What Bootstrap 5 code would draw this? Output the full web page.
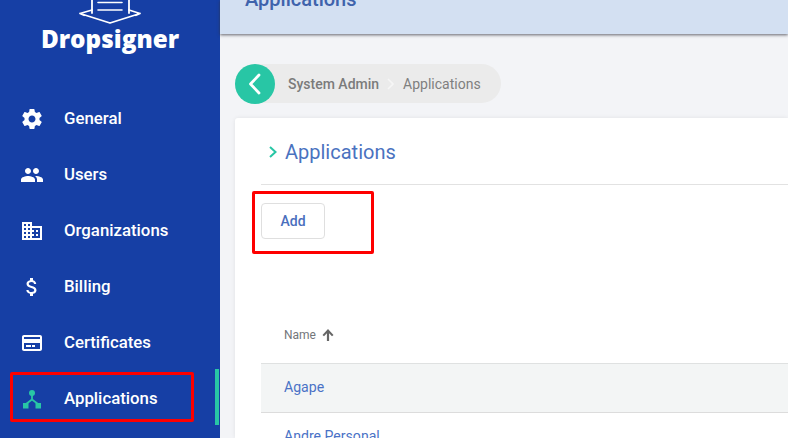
<!DOCTYPE html>
<html lang="en">
<head>
<meta charset="utf-8">
<title>Applications</title>
<link rel="stylesheet" href="https://cdn.jsdelivr.net/npm/bootstrap@5.3.0/dist/css/bootstrap.min.css">
<style>
html,body{height:438px;overflow:hidden}
body{font-family:Roboto,"Liberation Sans",sans-serif;background:#f3f4f7;position:relative}
.side{width:220px;height:438px;background:#163fa5;color:#fff;flex:none}
.logo-wrap{height:92px}
.logo-svg{display:block;margin:-1px auto 0;width:64px;height:26px}
.brand{font-family:"Open Sans",sans-serif;font-weight:800;font-size:24.3px;line-height:30px;color:#fff;text-align:center;margin-top:-1px}
.menu-item{height:56px;padding-left:20px;color:#fff;font-size:16.8px;font-weight:500;text-decoration:none;position:relative}
.menu-item:hover{color:#fff}
.menu-ico{width:24px;height:24px;margin-right:20px;flex:none;fill:#fff}
.ico-teal{fill:#28c6a5;stroke:none}
.ico-teal-line{fill:none;stroke:#28c6a5;stroke-width:1.800}
.active-bar{position:absolute;right:1px;top:-2px;width:4px;height:56px;background:#28c6a5}
.top{height:34px;background:#d3e0f2;box-shadow:0 1px 3px rgba(50,50,60,.75);padding:0 0 23px 25px;position:relative;z-index:1}
.top h1{font-size:20px;font-weight:500;color:#3f63ac;margin:0;line-height:24px;white-space:nowrap}
.main{min-width:0}
.crumbs{margin:30px 0 0 15px;height:39px;width:266px;background:#ebebeb;border-radius:20px}
.crumb-back{width:40px;height:40px;border-radius:50%;background:#28c6a5;flex:none;margin-top:-1px;margin-bottom:-1px}
.crumb-a{font-size:14px;font-weight:500;color:#7b7b7b;margin-left:13px;padding-top:2px}
.crumb-sep{margin:0 9px 0 8px;display:block}
.crumb-b{font-size:14px;color:#7f7f7f;padding-top:2px}
.panel{margin:15px 0 0 15px;background:#fff;box-shadow:0 0 4px rgba(0,0,0,.08);height:320px;border-radius:3px 0 0 0;overflow:hidden}
.panel-head{height:66px;padding:2px 0 0 34px}
.panel-head h2{font-size:20px;font-weight:400;color:#4a72bf;margin:0 0 0 8px;line-height:24px}
.body-wrap{padding:0 0 0 26px}
.rule-line{border-top:1px solid #e2e2e2;margin-bottom:18px}
.add-btn{display:block;width:64px;height:36px;padding:0;font-size:14px;font-weight:500;color:#4a6fbd;border:1px solid #dfdfdf;border-radius:4px;background:#fff}
.data-tbl{margin:0}
.data-tbl th{height:124px;padding:0 0 19px 23px;font-size:12px;font-weight:400;color:#73767a;vertical-align:bottom;border-bottom:1px solid #dfe1e1;box-shadow:none}
.data-tbl td{height:49px;padding:0 0 0 23px;font-size:14.1px;color:#4a72c6;border-bottom:1px solid #dcdcdc;background:#fff;box-shadow:none;vertical-align:middle}
.data-tbl tr.shade td{background:#f3f5f5}
.data-tbl a{color:#4a72c6;text-decoration:none}
.sort-ico{margin-left:3px;vertical-align:-2px}
.mark-a,.mark-b{position:absolute;border:3px solid #fe0000;border-radius:2px;pointer-events:none;z-index:5}
.mark-a{left:10px;top:372px;width:184px;height:50px}
.mark-b{left:252px;top:191px;width:122px;height:63px}
</style>
</head>
<body>
<div class="d-flex">
  <aside class="side">
    <div class="logo-wrap">
      <svg class="logo-svg" viewBox="0 0 64 26" fill="none" stroke="#fff" stroke-width="1.800" stroke-linejoin="round" stroke-linecap="round">
        <path d="M14 -4V14M51 -4V14"/>
        <path d="M20 3.500H44M20 11H44" stroke-width="1.600"/>
        <path d="M14 11L2 14.500L6 16.200M51 11L62 14.500L58 16.200M2 14.500L32 24L62 14.500"/>
      </svg>
      <div class="brand">Dropsigner</div>
    </div>
    <nav class="d-flex flex-column">
      <a class="menu-item d-flex align-items-center" href="#">
        <svg class="menu-ico" viewBox="0 0 24 24"><path d="M19.430 12.980c.04-.32.07-.64.07-.98s-.03-.66-.07-.98l2.110-1.650c.19-.15.24-.42.12-.64l-2-3.460c-.12-.22-.39-.3-.61-.22l-2.490 1c-.52-.4-1.080-.73-1.690-.98l-.38-2.650A.488.488 0 0 0 14 2h-4c-.25 0-.46.18-.49.42l-.38 2.650c-.61.25-1.170.59-1.690.98l-2.490-1c-.23-.09-.49 0-.61.22l-2 3.460c-.13.22-.07.49.12.64l2.110 1.650c-.04.32-.07.65-.07.98s.03.66.07.98l-2.110 1.650c-.19.15-.24.42-.12.64l2 3.460c.12.22.39.3.61.22l2.490-1c.52.4 1.080.73 1.690.98l.38 2.650c.03.24.24.42.49.42h4c.25 0 .46-.18.49-.42l.38-2.650c.61-.25 1.170-.59 1.690-.98l2.490 1c.23.09.49 0 .61-.22l2-3.460c.12-.22.07-.49-.12-.64l-2.110-1.650zM12 15.500c-1.930 0-3.500-1.570-3.500-3.500s1.570-3.500 3.500-3.500 3.500 1.570 3.500 3.500-1.570 3.500-3.500 3.500z"/></svg>
        General
      </a>
      <a class="menu-item d-flex align-items-center" href="#">
        <svg class="menu-ico" viewBox="0 0 24 24"><path d="M16 11c1.660 0 2.990-1.340 2.990-3S17.660 5 16 5s-3 1.340-3 3 1.340 3 3 3zm-8 0c1.660 0 2.990-1.340 2.990-3S9.660 5 8 5 5 6.340 5 8s1.340 3 3 3zm0 2c-2.330 0-7 1.170-7 3.500V19h14v-2.500c0-2.330-4.670-3.500-7-3.500zm8 0c-.29 0-.62.02-.97.05 1.160.84 1.970 1.970 1.970 3.450V19h6v-2.500c0-2.330-4.670-3.500-7-3.500z"/></svg>
        Users
      </a>
      <a class="menu-item d-flex align-items-center" href="#">
        <svg class="menu-ico" viewBox="0 0 24 24"><path d="M12 7V3H2v18h20V7H12zM6 19H4v-2h2v2zm0-4H4v-2h2v2zm0-4H4V9h2v2zm0-4H4V5h2v2zm4 12H8v-2h2v2zm0-4H8v-2h2v2zm0-4H8V9h2v2zm0-4H8V5h2v2zm10 12h-8v-2h2v-2h-2v-2h2v-2h-2V9h8v10zm-2-8h-2v2h2v-2zm0 4h-2v2h2v-2z"/></svg>
        Organizations
      </a>
      <a class="menu-item d-flex align-items-center" href="#">
        <svg class="menu-ico" viewBox="0 0 24 24"><path d="M11.800 10.900c-2.270-.59-3-1.200-3-2.150 0-1.090 1.010-1.850 2.700-1.850 1.780 0 2.440.85 2.500 2.100h2.210c-.07-1.720-1.120-3.300-3.210-3.810V3h-3v2.160c-1.940.42-3.500 1.680-3.500 3.610 0 2.310 1.910 3.460 4.700 4.130 2.500.6 3 1.480 3 2.410 0 .69-.49 1.790-2.700 1.790-2.060 0-2.870-.92-2.980-2.100h-2.200c.12 2.190 1.760 3.420 3.680 3.830V21h3v-2.150c1.950-.37 3.500-1.500 3.500-3.550 0-2.840-2.430-3.810-4.700-4.400z"/></svg>
        Billing
      </a>
      <a class="menu-item d-flex align-items-center" href="#">
        <svg class="menu-ico" viewBox="0 0 24 24"><path d="M20 4H4c-1.110 0-1.990.89-1.990 2L2 18c0 1.110.89 2 2 2h16c1.110 0 2-.89 2-2V6c0-1.110-.89-2-2-2zm0 14H4v-6h16v6zm0-10H4V6h16v2zM6 14h5v2H6zm6 0h3v2h-3z"/></svg>
        Certificates
      </a>
      <a class="menu-item d-flex align-items-center" href="#">
        <svg class="menu-ico" viewBox="0 0 24 24"><path class="ico-teal-line" d="M12 8V12.500L6 17M12 12.500L18 17"/><circle class="ico-teal" cx="12" cy="6" r="3"/><path class="ico-teal" d="M3 16h5.500v5.500H3zM15.500 16H21v5.500h-5.500z"/></svg>
        Applications
        <span class="active-bar"></span>
      </a>
    </nav>
  </aside>
  <main class="main flex-grow-1">
    <header class="top d-flex align-items-end"><h1>Applications</h1></header>
    <div class="crumbs d-flex align-items-center">
      <span class="crumb-back d-flex align-items-center justify-content-center">
        <svg width="16" height="24" viewBox="0 0 16 24" fill="none" stroke="#fff" stroke-width="2.800" stroke-linecap="round" stroke-linejoin="round"><path d="M12 3L3.500 12L12 21"/></svg>
      </span>
      <span class="crumb-a">System Admin</span>
      <svg class="crumb-sep" width="7" height="12" viewBox="0 0 7 12" fill="none" stroke="#f6f6f6" stroke-width="1.600"><path d="M1 1l5 5-5 5"/></svg>
      <span class="crumb-b">Applications</span>
    </div>
    <section class="panel">
      <div class="panel-head d-flex align-items-center">
        <svg width="8" height="12" viewBox="0 0 8 12" fill="none" stroke="#28c6a5" stroke-width="2"><path d="M1 1l5.500 5-5.500 5"/></svg>
        <h2>Applications</h2>
      </div>
      <div class="body-wrap">
        <div class="rule-line"></div>
        <button class="add-btn btn" type="button">Add</button>
        <table class="data-tbl table">
          <thead><tr><th>Name <svg class="sort-ico" width="12" height="12" viewBox="0 0 12 12" fill="#666"><path d="M6 0L11.500 6 10 7.300 7.100 4.200V12H4.900V4.200L2 7.300 0.500 6z"/></svg></th></tr></thead>
          <tbody>
            <tr class="shade"><td><a href="#">Agape</a></td></tr>
            <tr><td><a href="#">Andre Personal</a></td></tr>
          </tbody>
        </table>
      </div>
    </section>
  </main>
</div>
<div class="mark-a"></div>
<div class="mark-b"></div>
</body>
</html>
